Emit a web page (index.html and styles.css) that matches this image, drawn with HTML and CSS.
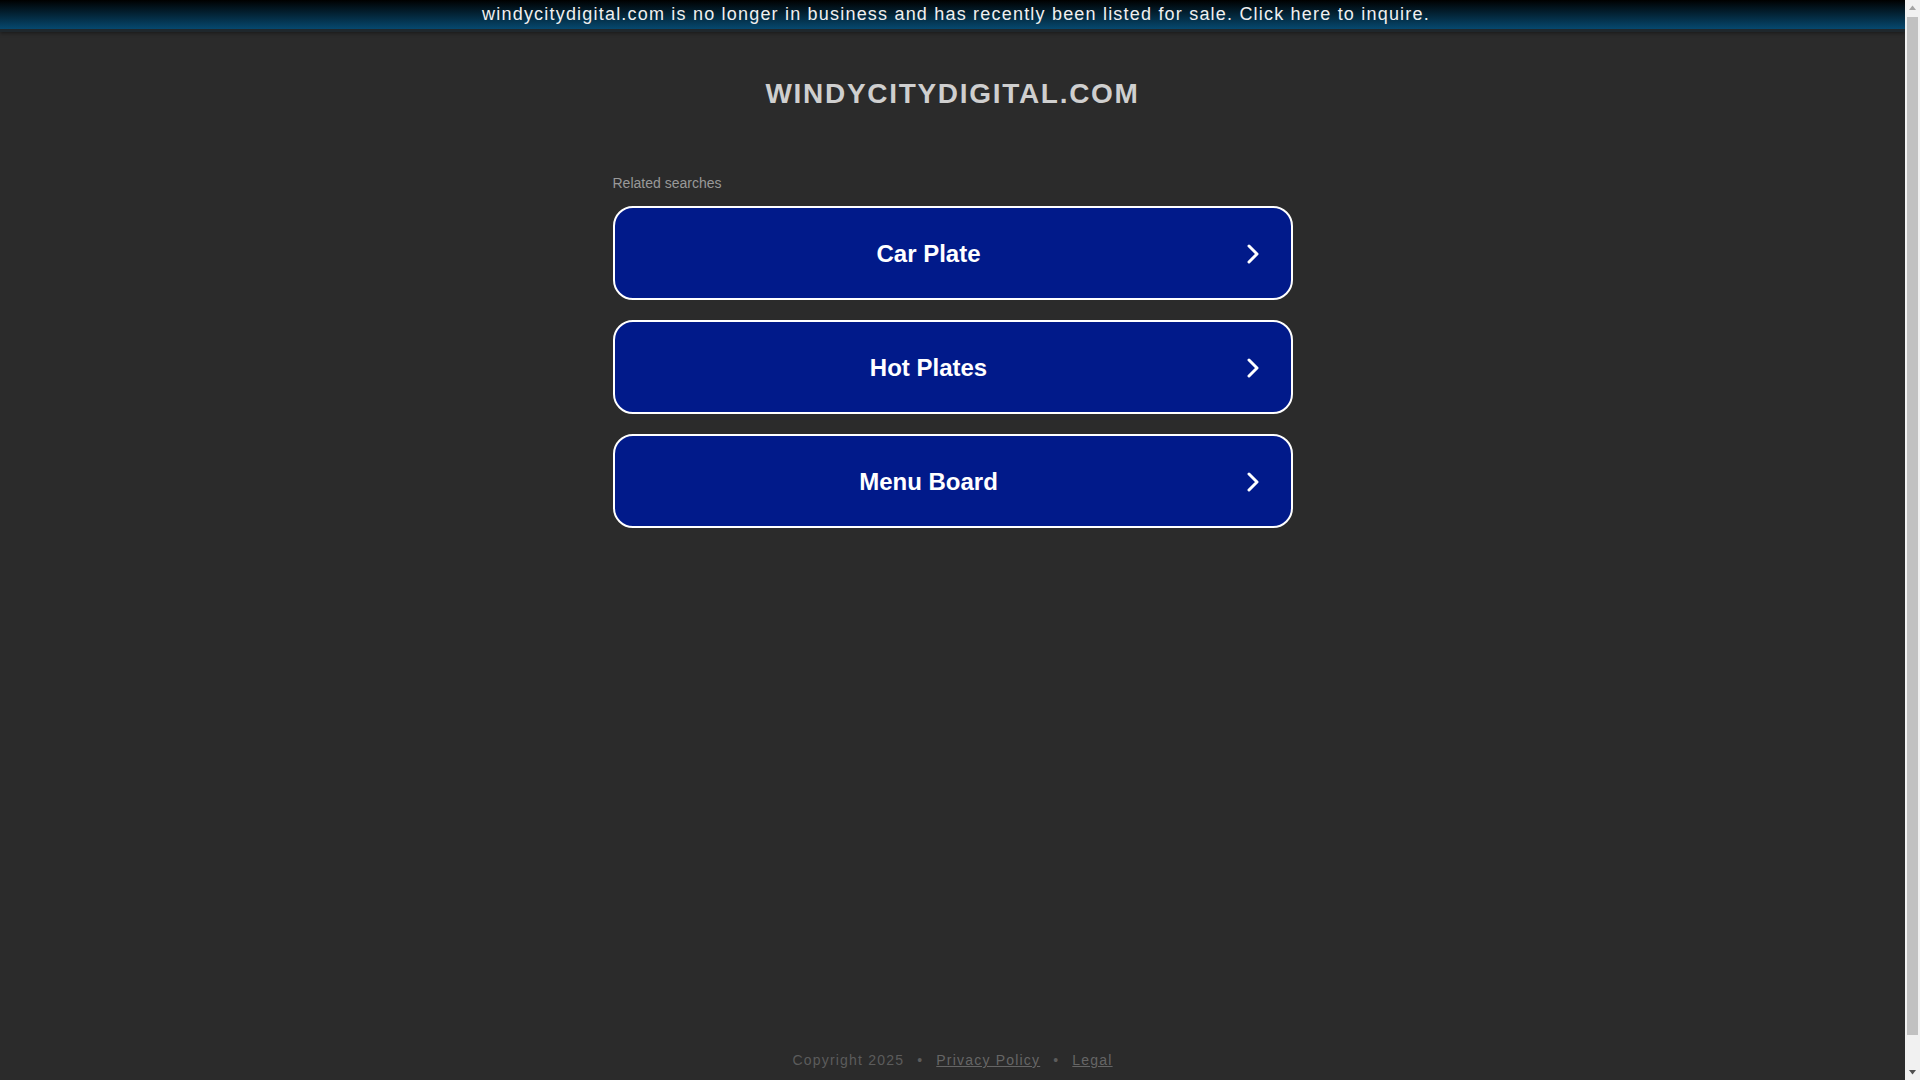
FILE: index.html
```html
<!DOCTYPE html>
<html lang="en">
<head>
<meta charset="utf-8">
<title>windycitydigital.com</title>
<link rel="stylesheet" href="styles.css">
</head>
<body>
<a class="announce" href="#">windycitydigital.com is no longer in business and has recently been listed for sale. Click here to inquire.</a>
<div class="page">
  <main class="main">
    <h1 class="domain">WINDYCITYDIGITAL.COM</h1>
    <section class="searches">
      <p class="searches-title">Related searches</p>
      <a class="search-btn" href="#">
        <span class="search-label">Car Plate</span>
        <svg class="chev" width="12" height="20" viewBox="0 0 12 20"><polyline points="2,2 10,10 2,18" fill="none" stroke="#fff" stroke-width="3" stroke-linecap="round" stroke-linejoin="round"/></svg>
      </a>
      <a class="search-btn" href="#">
        <span class="search-label">Hot Plates</span>
        <svg class="chev" width="12" height="20" viewBox="0 0 12 20"><polyline points="2,2 10,10 2,18" fill="none" stroke="#fff" stroke-width="3" stroke-linecap="round" stroke-linejoin="round"/></svg>
      </a>
      <a class="search-btn" href="#">
        <span class="search-label">Menu Board</span>
        <svg class="chev" width="12" height="20" viewBox="0 0 12 20"><polyline points="2,2 10,10 2,18" fill="none" stroke="#fff" stroke-width="3" stroke-linecap="round" stroke-linejoin="round"/></svg>
      </a>
    </section>
  </main>
  <footer class="footer">
    <span>Copyright 2025</span><span class="dot">•</span><a href="#">Privacy Policy</a><span class="dot">•</span><a href="#">Legal</a>
  </footer>
</div>
<div class="scrollbar" aria-hidden="true">
  <svg class="sb-arrow" width="15" height="15" viewBox="0 0 15 15"><polygon points="4,10 11,10 7.5,5.5" fill="#a3a3a3"/></svg>
  <div class="sb-thumb"></div>
  <svg class="sb-arrow" width="15" height="15" viewBox="0 0 15 15"><polygon points="4,5 11,5 7.5,9.5" fill="#505050"/></svg>
</div>
</body>
</html>
```
FILE: styles.css
```css
html, body {
  margin: 0;
  padding: 0;
}
body {
  background: #2b2b2b;
  font-family: "Liberation Sans", Arial, sans-serif;
  padding-right: 15px;
}
.announce {
  display: block;
  height: 29px;
  line-height: 28px;
  padding-left: 7px;
  text-align: center;
  color: #f0f0f0;
  text-decoration: none;
  font-size: 18px;
  letter-spacing: 1.2px;
  background: linear-gradient(#000000, #06496f);
  border-bottom: 3px solid #1f272c;
  box-shadow: 0 1px 4px rgba(0, 0, 0, 0.45);
}
.page {
  min-height: 100vh;
  display: flex;
  flex-direction: column;
}
.main {
  flex: 1;
  display: flex;
  flex-direction: column;
  align-items: center;
}
.domain {
  margin: 46px 0 0;
  font-size: 28px;
  line-height: 32px;
  font-weight: bold;
  letter-spacing: 1.7px;
  color: #cfcfcf;
}
.searches {
  width: 680px;
  margin-top: 65px;
  display: flex;
  flex-direction: column;
  gap: 20px;
}
.searches-title {
  margin: 0 0 -5px;
  font-size: 14px;
  line-height: 16px;
  color: #999999;
}
.search-btn {
  box-sizing: border-box;
  height: 94px;
  display: flex;
  align-items: center;
  padding: 1px 32px 0;
  border: 2px solid #ffffff;
  border-radius: 20px;
  background: #011a8a;
  color: #ffffff;
  text-decoration: none;
}
.search-label {
  flex: 1;
  text-align: center;
  font-size: 24px;
  font-weight: bold;
}
.chev {
  display: block;
  margin-left: 36px;
  flex-shrink: 0;
}
.footer {
  display: flex;
  justify-content: center;
  align-items: center;
  padding: 0 0 42px;
  font-size: 14px;
  line-height: 20px;
  letter-spacing: 1.2px;
  color: #5c5c5c;
}
.footer a {
  color: #666666;
  text-decoration: underline;
}
.dot {
  margin: 0 13px;
}
.scrollbar {
  position: fixed;
  top: 0;
  right: 0;
  width: 15px;
  height: 100vh;
  background: #f1f1f1;
  display: flex;
  flex-direction: column;
}
.sb-arrow {
  display: block;
  flex-shrink: 0;
}
.sb-thumb {
  flex: 1;
  margin: 2px 2px 30px;
  background: #c1c1c1;
}
```
